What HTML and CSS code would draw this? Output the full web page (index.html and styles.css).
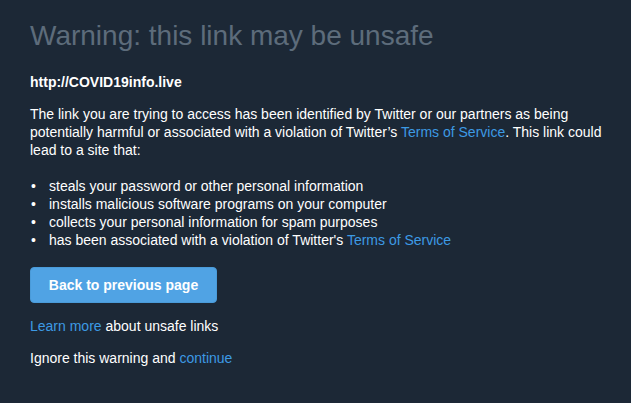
FILE: index.html
```html
<!DOCTYPE html>
<html lang="en">
<head>
<meta charset="utf-8">
<title>Warning: this link may be unsafe</title>
<link rel="stylesheet" href="styles.css">
</head>
<body>
<main class="page">
  <h1 class="title">Warning: this link may be unsafe</h1>
  <p class="url">http://COVID19info.live</p>
  <p class="intro">The link you are trying to access has been identified by Twitter or our partners as being potentially harmful or associated with a violation of Twitter’s <a href="#" class="link">Terms of Service</a>. This link could lead to a site that:</p>
  <ul class="reasons">
    <li>steals your password or other personal information</li>
    <li>installs malicious software programs on your computer</li>
    <li>collects your personal information for spam purposes</li>
    <li>has been associated with a violation of Twitter's <a href="#" class="link">Terms of Service</a></li>
  </ul>
  <div class="actions"><button class="back-btn" type="button">Back to previous page</button></div>
  <p class="note"><a href="#" class="link">Learn more</a> about unsafe links</p>
  <p class="note">Ignore this warning and <a href="#" class="link">continue</a></p>
</main>
</body>
</html>
```
FILE: styles.css
```css
html, body {
  margin: 0;
  padding: 0;
  background: #1c2836;
}
body {
  font-family: "Liberation Sans", Arial, sans-serif;
  font-size: 14px;
  line-height: 18px;
  color: #ffffff;
  height: 403px;
}
.page {
  width: 590px;
  padding: 20px 0 0 30px;
}
.title {
  margin: 0;
  font-size: 28px;
  line-height: 32px;
  font-weight: normal;
  color: #5d6c7b;
}
.url {
  margin: 21px 0 0;
  font-weight: bold;
}
.intro {
  margin: 14px 0 0;
}
.reasons {
  margin: 18px 0 0;
  padding: 0 0 0 19px;
  list-style: none;
}
.reasons li::before {
  content: "•";
  display: inline-block;
  width: 19px;
  margin-left: -19px;
  padding-left: 1px;
  box-sizing: border-box;
}
.link {
  color: #3d9ae4;
  text-decoration: none;
}
.actions {
  margin-top: 18px;
}
.back-btn {
  display: block;
  width: 187px;
  height: 36px;
  padding: 0;
  border: 1px solid #4a9bd9;
  border-radius: 4px;
  background: #50a3e4;
  color: #ffffff;
  font-family: "Liberation Sans", Arial, sans-serif;
  font-size: 14px;
  font-weight: bold;
  line-height: 18px;
}
.note {
  margin: 14px 0 0;
}
```
